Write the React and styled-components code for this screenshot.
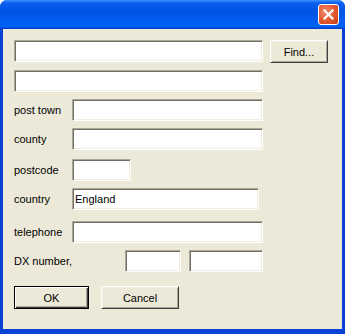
import React from 'react';
import styled, { createGlobalStyle } from 'styled-components';

const GlobalStyle = createGlobalStyle`
  html, body {
    margin: 0;
    padding: 0;
    background: #ffffff;
  }
  * {
    box-sizing: border-box;
  }
`;

const Window = styled.div`
  width: 345px;
  height: 334px;
  display: flex;
  flex-direction: column;
  background: #0842d6;
  border-radius: 7px 7px 0 0;
  overflow: hidden;
  font-family: "Liberation Sans", Arial, sans-serif;
  font-size: 11px;
  color: #000;
`;

// barre de titre XP, sans texte
const TitleBar = styled.div`
  height: 29px;
  flex: none;
  display: flex;
  align-items: center;
  justify-content: flex-end;
  padding-right: 6px;
  background: linear-gradient(
    180deg,
    #3d95ff 0%,
    #0a5ff0 10%,
    #0054e3 40%,
    #0060f5 85%,
    #0062f8 92%,
    #004fdc 95%,
    #003dd7 100%
  );
`;

const CloseButton = styled.button`
  width: 21px;
  height: 21px;
  padding: 0;
  display: flex;
  align-items: center;
  justify-content: center;
  border: 1px solid #ffffff;
  border-radius: 3px;
  background: radial-gradient(circle at 35% 35%, #f08a6a 0%, #e2572f 55%, #c23a18 100%);
  cursor: default;
`;

const Client = styled.div`
  flex: 1;
  margin: 0 3px 5px 3px;
  background: #ece9d8;
  padding: 11px 0 0 11px;
  display: flex;
  flex-direction: column;
`;

const Row = styled.div`
  display: flex;
  align-items: flex-start;
  margin-top: ${props => props.$top || 0}px;
`;

const Label = styled.span`
  width: ${props => props.$w || 58}px;
  flex: none;
  align-self: center;
  white-space: nowrap;
`;

const Field = styled.input`
  width: ${props => props.$w}px;
  height: 22px;
  flex: none;
  margin-left: ${props => props.$left || 0}px;
  padding: 0 2px 1px 2px;
  font-family: "Liberation Sans", Arial, sans-serif;
  font-size: 11px;
  color: #000;
  background: #ffffff;
  border: 1px solid;
  border-color: #aca899 #ffffff #ffffff #aca899;
  box-shadow: inset 1px 1px 0 #716f64, inset -1px -1px 0 #f1efe2;
  outline: none;
`;

const Button = styled.button`
  width: ${props => props.$w}px;
  height: 23px;
  flex: none;
  margin-left: ${props => props.$left || 0}px;
  padding: 0;
  font-family: "Liberation Sans", Arial, sans-serif;
  font-size: 11px;
  color: #000;
  background: #ece9d8;
  cursor: default;
  border: 1px solid;
  border-color: ${props => (props.$default ? '#000000' : '#ffffff #404040 #404040 #ffffff')};
  box-shadow: ${props =>
    props.$default
      ? 'inset 1px 1px 0 #ffffff, inset -1px -1px 0 #404040, inset -2px -2px 0 #aca899'
      : 'inset 1px 1px 0 #f1efe2, inset -1px -1px 0 #aca899'};
`;

const TopRow = styled(Row)`
  height: 22px;
  overflow: visible;
`;

const ButtonRow = styled(Row)`
  margin-top: 14px;
`;

export default function App() {
  return (
    <>
      <GlobalStyle />
      <Window>
        <TitleBar>
          <CloseButton aria-label="Close">
            <svg width="11" height="11" viewBox="0 0 11 11">
              <path d="M1.5 1.5 L9.5 9.5 M9.5 1.5 L1.5 9.5" stroke="#ffffff" strokeWidth="2.2" strokeLinecap="square" />
            </svg>
          </CloseButton>
        </TitleBar>
        <Client>
          <TopRow>
            <Field $w={249} readOnly />
            <Button $w={58} $left={7}>Find...</Button>
          </TopRow>
          <Row $top={8}>
            <Field $w={249} readOnly />
          </Row>
          <Row $top={7}>
            <Label>post town</Label>
            <Field $w={191} readOnly />
          </Row>
          <Row $top={7}>
            <Label>county</Label>
            <Field $w={191} readOnly />
          </Row>
          <Row $top={9}>
            <Label>postcode</Label>
            <Field $w={59} readOnly />
          </Row>
          <Row $top={7}>
            <Label>country</Label>
            <Field $w={187} readOnly defaultValue="England" />
          </Row>
          <Row $top={11}>
            <Label>telephone</Label>
            <Field $w={191} readOnly />
          </Row>
          <Row $top={7}>
            <Label $w={111}>DX number,</Label>
            <Field $w={56} readOnly />
            <Field $w={74} $left={8} readOnly />
          </Row>
          <ButtonRow>
            <Button $w={75} $default>OK</Button>
            <Button $w={78} $left={12}>Cancel</Button>
          </ButtonRow>
        </Client>
      </Window>
    </>
  );
}
